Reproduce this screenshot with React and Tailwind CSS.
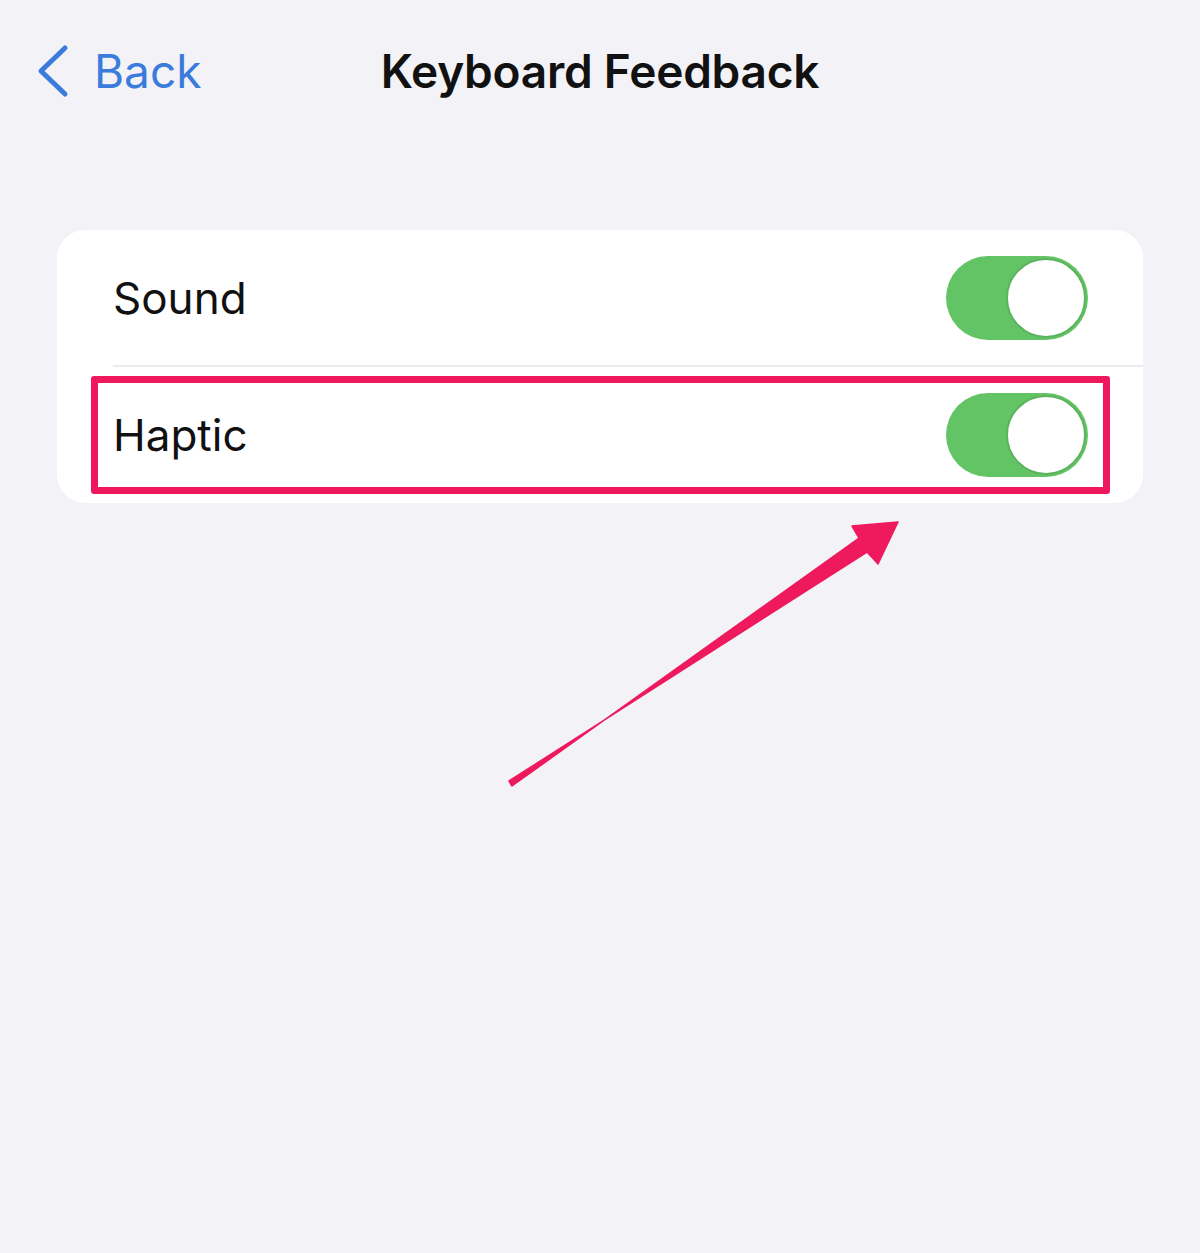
function Toggle() {
  return (
    <div className="flex h-[84px] w-[142px] items-center justify-end rounded-full bg-[#63c465] pr-[2px]">
      <div className="h-[80px] w-[80px] rounded-full border-2 border-[#5bb35d] bg-white" />
    </div>
  );
}

export default function App() {
  return (
    <div
      className="relative min-h-[1253px] w-full bg-[#f2f2f7]"
      style={{ fontFamily: "Inter, 'Noto Sans', sans-serif" }}
    >
      {/* Nav bar */}
      <header className="grid h-[142px] grid-cols-[1fr_auto_1fr] items-center">
        <div className="flex items-center pl-[36px] text-[#3a7bdc]">
          <svg width="34" height="54" viewBox="0 0 34 54" fill="none">
            <polyline
              points="29,4 5,27 29,50"
              stroke="currentColor"
              strokeWidth="5"
              strokeLinecap="round"
              strokeLinejoin="round"
            />
          </svg>
          <span className="ml-[24px] text-[46px] leading-none">Back</span>
        </div>
        <h1 className="text-[46px] font-semibold leading-none tracking-[-0.005em] text-[#111]">
          Keyboard Feedback
        </h1>
        <div />
      </header>

      {/* Settings card */}
      <div className="mx-[57px] mt-[88px] overflow-hidden rounded-[28px] bg-white">
        <div className="flex h-[135px] items-center justify-between pl-[56px] pr-[55px]">
          <span className="text-[44px] text-[#111]">Sound</span>
          <Toggle />
        </div>
        <div className="ml-[56px] h-[2px] bg-[#ececf0]" />
        <div className="relative flex h-[136px] items-center justify-between pl-[56px] pr-[55px]">
          <span className="text-[44px] text-[#111]">Haptic</span>
          <Toggle />
          {/* Highlight box */}
          <div className="pointer-events-none absolute bottom-[9px] left-[34px] right-[33px] top-[9px] rounded-[3px] border-[7px] border-[#f0185c]" />
        </div>
      </div>

      {/* Annotation arrow */}
      <svg
        className="pointer-events-none absolute left-0 top-0"
        width="1200"
        height="1253"
        viewBox="0 0 1200 1253"
      >
        <polygon
          points="509,781 867,552 878,564 898,522 852,526 859,538 512,786"
          fill="#ee1a5d"
          stroke="#ee1a5d"
          strokeWidth="1.5"
          strokeLinejoin="round"
        />
      </svg>
    </div>
  );
}
